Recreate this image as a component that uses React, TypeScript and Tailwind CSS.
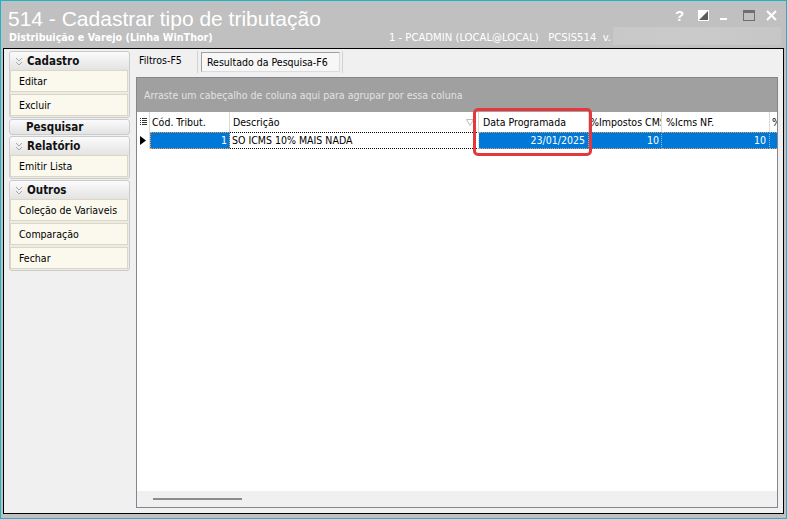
import React from "react";

const UI = "font-['DejaVu_Sans_Condensed','DejaVu_Sans',sans-serif] font-stretch-condensed";

function Chevron() {
  return (
    <svg width="8" height="9" viewBox="0 0 8 9" className="shrink-0">
      <polyline points="1,1 4,4 7,1" fill="none" stroke="#a8a8a8" strokeWidth="1" />
      <polyline points="1,5 4,8 7,5" fill="none" stroke="#a8a8a8" strokeWidth="1" />
    </svg>
  );
}

function GroupHeader({ label, chevron = true }: { label: string; chevron?: boolean }) {
  return (
    <div className="h-[18px] flex items-center pl-[5px] bg-gradient-to-b from-[#fbfbfb] to-[#e3e3e3] rounded-t-[3px]">
      <div className="w-[8px] flex items-center">{chevron ? <Chevron /> : null}</div>
      <span className={`ml-[4px] text-[11.5px] leading-[14px] font-bold text-[#111] ${UI}`}>{label}</span>
    </div>
  );
}

function Item({ label }: { label: string }) {
  return (
    <div className={`h-[22px] mr-[1px] flex items-center pl-[8px] border border-[#dcd8c0] bg-[#fbf9ee] text-[10.5px] leading-[13px] text-black ${UI}`}>
      {label}
    </div>
  );
}

function Group({ label, items }: { label: string; items: string[] }) {
  return (
    <div className="border border-[#cbcbcb] rounded-[3px] bg-[#ebebeb] flex flex-col">
      <GroupHeader label={label} />
      <div className="flex flex-col gap-[2px] pb-[1px]">
        {items.map((i) => (
          <Item key={i} label={i} />
        ))}
      </div>
    </div>
  );
}

function ListIcon() {
  return (
    <svg width="7" height="9" viewBox="0 0 7 9">
      {[1, 3, 5, 7].map((y) => (
        <g key={y}>
          <rect x="0" y={y - 1} width="1" height="1" fill="#333" />
          <rect x="2" y={y - 1} width="5" height="1" fill="#333" />
        </g>
      ))}
    </svg>
  );
}

export default function App() {
  const cell = `text-[10.5px] leading-[13px] ${UI}`;
  return (
    <div className="relative w-[787px] h-[519px] border border-[#1cb4c8] bg-[#c0c0c0] flex flex-col overflow-hidden">
      {/* Title bar */}
      <div className="h-[47px] flex flex-col shrink-0">
        <div className="flex items-start">
          <div className="pl-[7px] pt-[6px] text-[21px] leading-[23px] text-white font-['Liberation_Sans',Arial,sans-serif]">
            514 - Cadastrar tipo de tributação
          </div>
          <div className="ml-auto flex items-start pt-[9px] pr-[9px]">
            <span className="w-[9px] h-[11px] flex items-center justify-center text-white font-bold text-[15px] leading-[11px] font-['Liberation_Sans',Arial,sans-serif]">
              ?
            </span>
            <svg width="11" height="11" viewBox="0 0 11 11" className="ml-[14px]">
              <rect x="0.5" y="0.5" width="10" height="10" fill="#ffffff" stroke="#ffffff" />
              <polygon points="10,1 10,10 1,10" fill="#5c5c5c" />
            </svg>
            <svg width="7" height="11" viewBox="0 0 7 11" className="ml-[11px]">
              <rect x="0" y="8" width="7" height="2" fill="#ffffff" />
            </svg>
            <svg width="12" height="11" viewBox="0 0 12 11" className="ml-[16px]">
              <rect x="0.5" y="0.5" width="11" height="10" fill="none" stroke="#6f6f6f" />
              <rect x="0" y="0" width="12" height="3" fill="#6f6f6f" />
            </svg>
            <svg width="11" height="11" viewBox="0 0 11 11" className="ml-[11px]">
              <line x1="1" y1="1" x2="10" y2="10" stroke="#ffffff" strokeWidth="2" />
              <line x1="10" y1="1" x2="1" y2="10" stroke="#ffffff" strokeWidth="2" />
            </svg>
          </div>
        </div>
        <div className="flex items-start h-[14px] pr-[5px]">
          <span className={`pl-[8px] pt-[1px] text-[10.7px] leading-[14px] font-bold text-white ${UI}`}>
            Distribuição e Varejo (Linha WinThor)
          </span>
          <div className="ml-auto flex items-start">
            <span className={`pt-[1px] text-[11.2px] leading-[14px] text-white whitespace-pre ${UI}`}>
              {"1 - PCADMIN (LOCAL@LOCAL)   PCSIS514  v."}
            </span>
            <div className="ml-[2px] -mt-[3px] w-[168px] h-[18px] bg-gradient-to-r from-[#c8c8c8] via-[#cacaca] to-[#c6c6c6]" />
          </div>
        </div>
      </div>

      {/* Content */}
      <div className="mx-[2px] mb-[4px] flex-1 min-h-0 border border-black bg-[#f0f0f0] flex">
        {/* Sidebar */}
        <div className="w-[127px] shrink-0 pl-[5px] pr-[1px] pt-[2px] flex flex-col gap-[1px]">
          <Group label="Cadastro" items={["Editar", "Excluir"]} />
          <div className="h-[16px] border border-[#cbcbcb] rounded-[3px] bg-gradient-to-b from-[#fbfbfb] to-[#e3e3e3] flex items-center pl-[16px]">
            <span className={`text-[11.5px] leading-[14px] font-bold text-[#111] ${UI}`}>Pesquisar</span>
          </div>
          <Group label="Relatório" items={["Emitir Lista"]} />
          <Group label="Outros" items={["Coleção de Variaveis", "Comparação", "Fechar"]} />
        </div>

        {/* Main */}
        <div className="flex-1 min-w-0 flex flex-col pl-[5px] pr-[5px] pb-[5px]">
          {/* Tabs */}
          <div className="h-[28px] shrink-0 flex items-start">
            <div className={`w-[61px] pl-[3px] pt-[5px] text-black ${cell}`}>Filtros-F5</div>
            <div className="w-[1px] h-[22px] mt-[2px] bg-[#d2d2d2]" />
            <div
              className={`ml-[3px] mt-[3px] w-[139px] h-[20px] flex items-center pl-[5px] pt-[1px] border border-t-[#a0a0a0] border-l-[#a0a0a0] border-r-[#dcdcdc] border-b-[#dcdcdc] bg-[#f7f7f7] text-black ${cell}`}
            >
              Resultado da Pesquisa-F6
            </div>
            <div className="ml-[2px] w-[1px] h-[22px] mt-[2px] bg-[#d2d2d2]" />
          </div>

          {/* Grid */}
          <div className="flex-1 min-h-0 border border-[#858592] bg-white flex flex-col">
            <div className={`h-[34px] shrink-0 bg-[#a0a0a0] flex items-center pl-[7px] text-[#e2e2e2] ${cell}`}>
              Arraste um cabeçalho de coluna aqui para agrupar por essa coluna
            </div>
            {/* Header */}
            <div className={`h-[20px] shrink-0 flex text-black ${cell}`}>
              <div className="w-[13px] shrink-0 border-r border-[#dadada] flex items-center pl-[3px]">
                <ListIcon />
              </div>
              <div className="w-[80px] shrink-0 border-r border-[#dadada] flex items-center pl-[2px]">Cód. Tribut.</div>
              <div className="w-[249px] shrink-0 border-r border-[#dadada] flex items-center pl-[3px]">
                <span>Descrição</span>
                <svg width="8" height="7" viewBox="0 0 8 7" className="ml-auto mr-[4px]">
                  <polygon points="0.5,0.5 7.5,0.5 4,6.5" fill="none" stroke="#bdbdbd" />
                </svg>
              </div>
              <div className="w-[110px] shrink-0 border-r border-[#dadada] flex items-center pl-[4px]">Data Programada</div>
              <div className="w-[73px] shrink-0 border-r border-[#dadada] flex items-center pl-[1px] overflow-hidden whitespace-nowrap">
                %Impostos CMS
              </div>
              <div className="w-[108px] shrink-0 border-r border-[#dadada] flex items-center pl-[4px]">%Icms NF.</div>
              <div className="flex-1 min-w-0 flex items-center pl-[2px] overflow-hidden whitespace-nowrap">%</div>
            </div>
            {/* Row */}
            <div className={`h-[17px] shrink-0 flex ${cell}`}>
              <div className="w-[13px] shrink-0 border-r border-[#dadada] flex items-center pl-[3px]">
                <svg width="6" height="9" viewBox="0 0 6 9">
                  <polygon points="0,0 6,4.5 0,9" fill="#000" />
                </svg>
              </div>
              <div className="w-[80px] shrink-0 bg-[#0078d7] border border-dotted border-[#f0a050] flex items-center justify-end pr-[2px] text-white">
                1
              </div>
              <div className="w-[249px] shrink-0 border-y border-dotted border-black border-r border-r-[#dadada] border-r-solid flex items-center pl-[2px] text-black">
                SO ICMS 10% MAIS NADA
              </div>
              <div className="w-[110px] shrink-0 bg-[#0078d7] border-y border-dotted border-[#e8a060] border-r border-r-[#9bb8d6] border-r-solid flex items-center justify-end pr-[3px] text-white">
                23/01/2025
              </div>
              <div className="w-[73px] shrink-0 bg-[#0078d7] border-y border-dotted border-[#e8a060] border-r border-r-[#9bb8d6] border-r-solid flex items-center justify-end pr-[2px] text-white">
                10
              </div>
              <div className="w-[108px] shrink-0 bg-[#0078d7] border-y border-dotted border-[#e8a060] border-r border-r-[#9bb8d6] border-r-solid flex items-center justify-end pr-[3px] text-white">
                10
              </div>
              <div className="flex-1 min-w-0 bg-[#0078d7] border-y border-dotted border-[#e8a060]" />
            </div>
            <div className="flex-1 bg-white" />
            <div className="h-[16px] shrink-0 bg-[#f0f0f0] pt-[7px] pl-[16px]">
              <div className="w-[89px] h-[2px] bg-[#8c8c8c]" />
            </div>
          </div>
        </div>
      </div>

      {/* Annotation highlight */}
      <div className="absolute left-[472px] top-[107px] w-[119px] h-[48px] border-[3px] border-[#e4383c] rounded-[5px] pointer-events-none" />
    </div>
  );
}
